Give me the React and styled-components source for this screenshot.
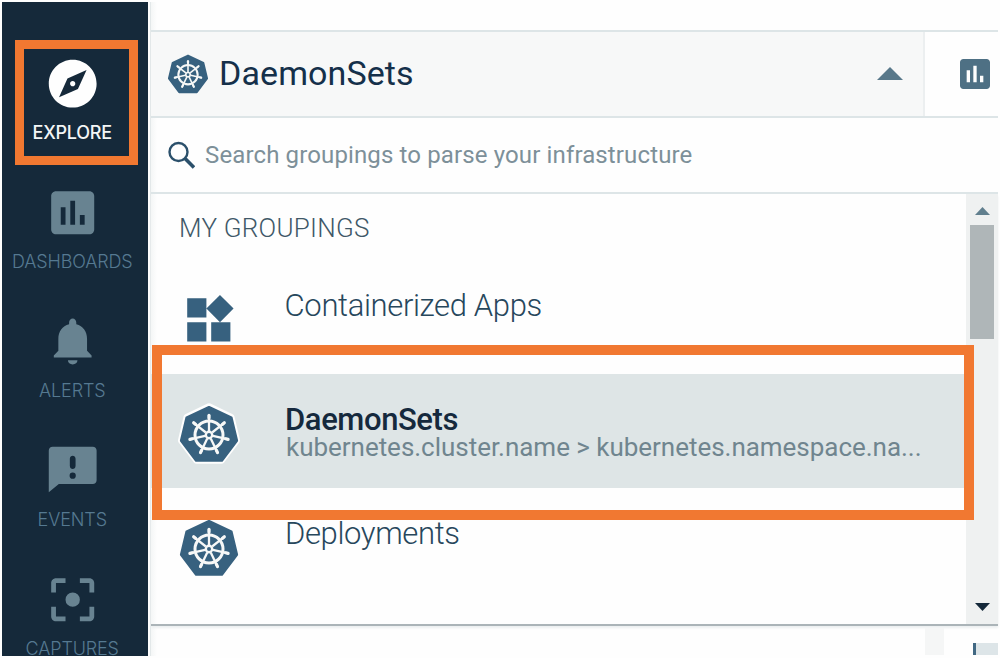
import React from "react";
import styled, { createGlobalStyle } from "styled-components";

const GlobalStyle = createGlobalStyle`
  * { box-sizing: border-box; }
  body { margin: 0; background: #fefefe; font-family: Roboto, "Liberation Sans", sans-serif; }
  svg { display: block; flex: none; }
`;

const Frame = styled.div`
  display: flex;
  width: 1000px;
  height: 658px;
  padding: 2px;
  overflow: hidden;
  background: #fefefe;
`;

const Sidebar = styled.nav`
  display: flex;
  flex-direction: column;
  flex: none;
  width: 146px;
  padding-top: 52.6px;
  background: #15293a;
`;

const NavItem = styled.a`
  position: relative;
  display: flex;
  flex-direction: column;
  align-items: center;
  flex: none;
  height: 129px;
  padding-right: 5.4px;
  color: ${(p) => (p.$active ? "#fefefe" : "#688391")};

  &:last-child {
    height: 86px;
  }
`;

const NavLabel = styled.span`
  margin-top: 14px;
  font-family: Inter, Roboto, sans-serif;
  font-size: 18px;
  line-height: 14px;
  font-weight: ${(p) => (p.$active ? 500 : 300)};
  letter-spacing: ${(p) => p.$track}px;
  margin-right: ${(p) => -p.$track}px;
  color: ${(p) => (p.$active ? "#f3f6f6" : "#557991")};
`;

const NavHighlight = styled.div`
  position: absolute;
  left: 13px;
  top: -14.6px;
  width: 123px;
  height: 125px;
  border: 9px solid #f17831;
`;

const Main = styled.main`
  display: flex;
  flex-direction: column;
  flex: 1;
  min-width: 0;
  margin-left: 2px;
  border-left: 1px solid #e3e8e9;
  background: linear-gradient(90deg, #f4f6f6, #fefefe 6px);
`;

const TopStrip = styled.div`
  height: 28px;
`;

const Header = styled.header`
  display: flex;
  height: 88px;
  border-top: 2px solid #dde5e7;
  border-bottom: 2px solid #dde5e7;
`;

const GroupingToggle = styled.div`
  display: flex;
  align-items: center;
  width: 774px;
  padding: 0 20px 0 17px;
  border-right: 2px solid #eceff0;
  background: #f7f8f8;
`;

const GroupingTitle = styled.h1`
  flex: 1;
  margin: 0 0 2px 11px;
  font-size: 34px;
  line-height: 40px;
  font-weight: 400;
  letter-spacing: 0.1px;
  color: #15304a;
`;

const ToggleArrow = styled.span`
  margin-bottom: 2px;
`;

const HeaderActions = styled.div`
  display: flex;
  align-items: center;
  padding-left: 30px;
`;

const SearchRow = styled.div`
  display: flex;
  align-items: center;
  height: 76px;
  padding-left: 16px;
  border-bottom: 2px solid #dde5e7;
`;

const SearchHint = styled.span`
  margin: 0 0 1px 10px;
  font-size: 24px;
  line-height: 30px;
  letter-spacing: 0.13px;
  color: #7d9099;
`;

const ListPanel = styled.section`
  display: flex;
  height: 432px;
  border-bottom: 2px solid #abb4b8;
  box-shadow: 0 2px 2px #eceff0;
`;

const List = styled.div`
  flex: 1;
  min-width: 0;
`;

const ListHeading = styled.h2`
  height: 66px;
  margin: 0;
  padding: 18px 0 0 28px;
  font-size: 26px;
  line-height: 32px;
  font-weight: 300;
  letter-spacing: 0.25px;
  color: #405868;
`;

const Row = styled.div`
  position: relative;
  display: flex;
  align-items: flex-start;
  height: 114px;
  padding: 31.4px 40px 0 29px;
  background: ${(p) => (p.$selected ? "#dee5e6" : "transparent")};
`;

const RowText = styled.div`
  flex: none;
  width: 640px;
  margin: -0.4px 0 0 47px;
`;

const RowTitle = styled.div`
  font-size: 31px;
  line-height: 30px;
  font-weight: ${(p) => (p.$selected ? 500 : 300)};
  letter-spacing: ${(p) => (p.$selected ? -0.4 : -0.36)}px;
  color: ${(p) => (p.$selected ? "#15293d" : "#27475c")};
`;

const RowPath = styled.div`
  padding-left: 1px;
  font-size: 26px;
  line-height: 24px;
  font-weight: 400;
  letter-spacing: -0.03px;
  white-space: nowrap;
  color: #70858f;
`;

const RowHighlight = styled.div`
  position: absolute;
  z-index: 1;
  left: 1px;
  top: -29px;
  width: 822px;
  height: 175px;
  border: 10px solid #f17831;
`;

const ScrollBar = styled.div`
  display: flex;
  flex-direction: column;
  align-items: center;
  justify-content: space-between;
  width: 32px;
  padding: 13px 0 13px;
  background: #eff1f1;
`;

const ScrollThumb = styled.div`
  width: 24px;
  height: 114px;
  margin: 10.4px 0 auto;
  background: #afb6b8;
`;

const Footer = styled.footer`
  display: flex;
  align-items: flex-end;
  flex: 1;
  padding: 2px 0 1px 774px;
`;

const FooterColumn = styled.div`
  width: 19px;
  height: 27px;
  margin-right: 29px;
  background: #f5f6f6;
`;

const FooterField = styled.div`
  width: 25px;
  height: 12px;
  border-left: 3px solid #416883;
  background: #dde5e8;
`;

const icons = {
  explore:
    "M12 10.9c-.61 0-1.1.49-1.1 1.1s.49 1.1 1.1 1.1c.61 0 1.1-.49 1.1-1.1s-.49-1.1-1.1-1.1zM12 2C6.48 2 2 6.48 2 12s4.48 10 10 10 10-4.48 10-10S17.52 2 12 2zm2.19 12.19L6.3 17.7 9.81 9.81 17.8 6.3z",
  chart:
    "M19 3H5c-1.1 0-2 .9-2 2v14c0 1.1.9 2 2 2h14c1.1 0 2-.9 2-2V5c0-1.1-.9-2-2-2zM9 17H7V9.7h2zm4 0h-2V7h2zm4 0h-2v-4h2z",
  bell:
    "M12 21.5c1.1 0 2-.7 2-1.7h-4c0 1 .89 1.7 2 1.7zm6-5.7v-5c0-3.07-1.64-5.44-4.5-6.12V4c0-.83-.67-1.7-1.5-1.7s-1.5.87-1.5 1.7v.68C7.63 5.36 6 7.72 6 10.8v5l-1.9 2v.8h15.8v-.8z",
  feedback:
    "M20.4 2H3.6C2.7 2 2 2.7 2 3.6V21l4.2-3.4h14.2c.9 0 1.6-.7 1.6-1.6V3.6c0-.9-.7-1.6-1.6-1.6zM12 15.4a1.3 1.3 0 1 1 0-2.6 1.3 1.3 0 0 1 0 2.6zm1.2-5.5c0 1.8-2.4 1.8-2.4 0V7c0-1.7 2.4-1.7 2.4 0z",
  focus:
    "M5 15H3v4c0 1.1.9 2 2 2h4v-2H5zM5 5h4V3H5c-1.1 0-2 .9-2 2v4h2zm14-2h-4v2h4v4h2V5c0-1.1-.9-2-2-2zm0 16h-4v2h4c1.1 0 2-.9 2-2v-4h-2zM12 9a3 3 0 1 0 0 6 3 3 0 0 0 0-6z",
  widgets:
    "M13 13v8h8v-8zM3 21h8v-8H3zM3 3v8h8V3zm13.66-1.31L11 7.34 16.66 13l5.66-5.66z",
};

function Icon({ name, size = 57.4, color = "currentColor" }) {
  return (
    <svg width={size} height={size} viewBox="0 0 24 24" fill={color}>
      <path fillRule="evenodd" d={icons[name]} />
    </svg>
  );
}

const spokes = [0, 1, 2, 3, 4, 5, 6].map((i) => (i * 360) / 7);

function HelmIcon({ size, halo }) {
  return (
    <svg width={size} height={size} viewBox="-29 -30 58 58" overflow="visible">
      {halo && (
        <path
          d="M0-28.5 22.3-17.8 27.8 5.6 12.5 25.5H-12.5L-27.8 5.6-22.3-17.8z"
          fill="#fefefe"
          stroke="#fefefe"
          strokeWidth="6.5"
          strokeLinejoin="round"
        />
      )}
      <path
        d="M0-27.8 22.3-17.4 27.8 5.6 12.9 25.5H-12.9L-27.8 5.6-22.3-17.4z"
        fill="#37617f"
        stroke="#37617f"
        strokeWidth="2.6"
        strokeLinejoin="round"
      />
      <g stroke="#f7f8f7" fill="none">
        <circle r="14" strokeWidth="3" />
        <circle r="3.2" strokeWidth="2.4" />
        {spokes.map((a) => (
          <g key={a} transform={`rotate(${a})`}>
            <path d="M0-4V-20" strokeWidth="2.3" />
            <path d="M0-17V-19.6" strokeWidth="3.2" strokeLinecap="round" />
          </g>
        ))}
      </g>
    </svg>
  );
}

function Arrow({ width, height, color, down }) {
  return (
    <svg width={width} height={height} viewBox="0 0 10 10" preserveAspectRatio="none">
      <path d={down ? "M0 0H10L5 10z" : "M0 10H10L5 0z"} fill={color} />
    </svg>
  );
}

const navItems = [
  { label: "EXPLORE", icon: "explore", active: true, track: -0.25 },
  { label: "DASHBOARDS", icon: "chart", track: -0.15 },
  { label: "ALERTS", icon: "bell", track: -0.1 },
  { label: "EVENTS", icon: "feedback", track: -0.1 },
  { label: "CAPTURES", icon: "focus", track: -0.15 },
];

export default function App() {
  return (
    <>
      <GlobalStyle />
      <Frame>
        <Sidebar>
          {navItems.map((item) => (
            <NavItem key={item.label} $active={item.active}>
              <Icon name={item.icon} />
              <NavLabel $active={item.active} $track={item.track}>
                {item.label}
              </NavLabel>
              {item.active && <NavHighlight />}
            </NavItem>
          ))}
        </Sidebar>
        <Main>
          <TopStrip />
          <Header>
            <GroupingToggle>
              <HelmIcon size={40} />
              <GroupingTitle>DaemonSets</GroupingTitle>
              <ToggleArrow>
                <Arrow width={26} height={13} color="#58788a" />
              </ToggleArrow>
            </GroupingToggle>
            <HeaderActions>
              <Icon name="chart" size={40} color="#4e7084" />
            </HeaderActions>
          </Header>
          <SearchRow>
            <svg width="28" height="28" viewBox="0 0 28 28" fill="none" stroke="#2b506b">
              <circle cx="11.5" cy="11" r="9" strokeWidth="2.4" />
              <path d="M18.3 17.8 27 26.6" strokeWidth="3.6" />
            </svg>
            <SearchHint>Search groupings to parse your infrastructure</SearchHint>
          </SearchRow>
          <ListPanel>
            <List>
              <ListHeading>MY GROUPINGS</ListHeading>
              <Row>
                <Icon name="widgets" size={57.6} color="#37617f" />
                <RowText>
                  <RowTitle>Containerized Apps</RowTitle>
                </RowText>
              </Row>
              <Row $selected>
                <HelmIcon size={58} halo />
                <RowText>
                  <RowTitle $selected>DaemonSets</RowTitle>
                  <RowPath>kubernetes.cluster.name &gt; kubernetes.namespace.na...</RowPath>
                </RowText>
                <RowHighlight />
              </Row>
              <Row>
                <HelmIcon size={58} />
                <RowText>
                  <RowTitle>Deployments</RowTitle>
                </RowText>
              </Row>
            </List>
            <ScrollBar>
              <Arrow width={15} height={8} color="#617f8e" />
              <ScrollThumb />
              <Arrow width={15} height={8} color="#15293a" down />
            </ScrollBar>
          </ListPanel>
          <Footer>
            <FooterColumn />
            <FooterField />
          </Footer>
        </Main>
      </Frame>
    </>
  );
}
